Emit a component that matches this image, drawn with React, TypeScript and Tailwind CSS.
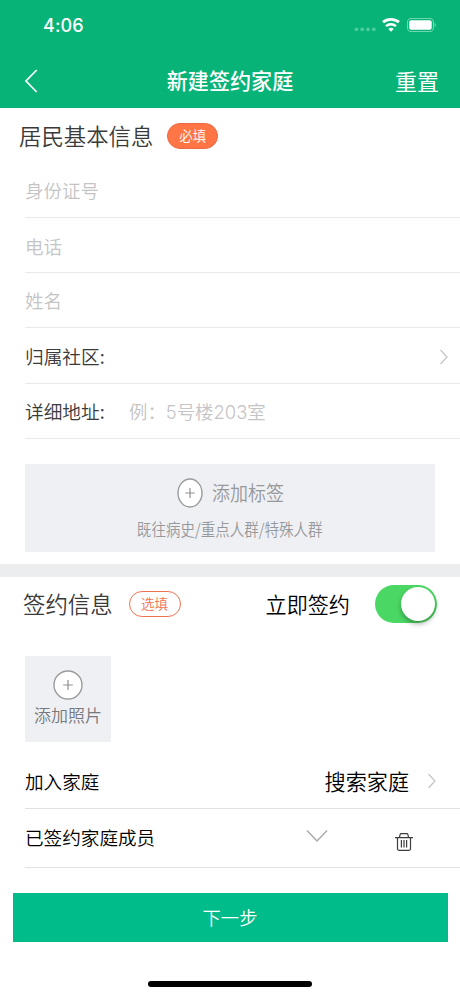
import React from "react";

const cjk = "font-['Noto_Sans_CJK_SC',sans-serif]";

function PlusCircle({ rx, className }: { rx: number; className: string }) {
  return (
    <svg viewBox="0 0 32 32" className={className} fill="none">
      <ellipse cx="16" cy="16" rx={rx} ry="14" fill="#fff" stroke="#999b9c" strokeWidth="1.4" />
      <path d="M11.2 16h9.6M16 11v10" stroke="#8f9192" strokeWidth="1.2" />
    </svg>
  );
}

function Chevron({ className }: { className: string }) {
  return (
    <svg viewBox="0 0 10 16" className={className} fill="none" stroke="#c4c4c6" strokeWidth="1.2">
      <path d="M1.5 1l6.5 7-6.5 7" />
    </svg>
  );
}

function StatusIcons() {
  return (
    <svg viewBox="0 0 90 20" className="h-5 w-[90px]" fill="none">
      <g fill="#4ccb9d">
        <rect x="4.6" y="12.8" width="3.6" height="3.2" rx="1" />
        <rect x="10.4" y="12.8" width="3.6" height="3.2" rx="1" />
        <rect x="16.2" y="12.8" width="3.6" height="3.2" rx="1" />
        <rect x="22" y="12.8" width="3.6" height="3.2" rx="1" />
      </g>
      <path d="M33 7.2a12.5 12.5 0 0 1 16 0" stroke="#fff" strokeWidth="2.8" />
      <path d="M36 11.1a7.6 7.6 0 0 1 10 0" stroke="#fff" strokeWidth="2.5" />
      <path d="M38.3 13.9a4 4 0 0 1 5.4 0L41 16.8z" fill="#fff" />
      <rect x="57.5" y="3.5" width="26" height="13" rx="3.6" stroke="#6fd6b0" strokeWidth="1.1" />
      <rect x="59.2" y="5.3" width="22.5" height="9.4" rx="2" fill="#fff" />
      <path d="M84.7 8.1c1.7.5 1.7 3.3 0 3.8z" fill="#6fd6b0" />
    </svg>
  );
}

function Field({ label, h }: { label: string; h: string }) {
  return (
    <div className={`ml-[25px] flex items-center border-b border-[#e9e9ea] text-[18.5px] font-[350] text-[#c4c4c6] ${h}`}>
      {label}
    </div>
  );
}

export default function App() {
  return (
    <div className={`flex h-[996px] w-[460px] flex-col overflow-hidden bg-white leading-none font-[350] whitespace-nowrap ${cjk}`}>
      <header className="h-[108px] shrink-0 bg-[#08b378] text-white">
        <div className="flex h-[54px] items-start justify-between pt-[15px] pr-[20px] pl-[43px]">
          <span className="pt-px font-['Inter',sans-serif] text-[18px] leading-5 font-medium tracking-[0.1px]">4:06</span>
          <StatusIcons />
        </div>
        <div className="grid h-[54px] grid-cols-[100px_1fr_100px] items-center">
          <svg viewBox="0 0 14 24" className="ml-6 h-6 w-3.5" fill="none" stroke="#fff" strokeWidth="1.7">
            <path d="M12.7 1L2 12l10.7 11" />
          </svg>
          <span className="text-center text-[21.1px] font-medium">新建签约家庭</span>
          <span className="pr-[21px] pb-[2px] text-right text-[22px] font-normal">重置</span>
        </div>
      </header>

      <section className="h-[456px] shrink-0">
        <div className="flex h-[55px] items-center pl-[19px]">
          <h2 className="pb-px text-[22.4px] font-[350] text-[#3a3a3a]">居民基本信息</h2>
          <span className="ml-[14px] flex h-[26px] w-[51px] items-center justify-center rounded-full border border-[#ec6840] bg-[#ff7545] text-[13.5px] text-white">
            必填
          </span>
        </div>
        <Field label="身份证号" h="h-[55px]" />
        <Field label="电话" h="h-[55px] pt-[2px]" />
        <Field label="姓名" h="h-[55px]" />
        <div className="ml-[25px] flex h-[56px] items-center justify-between border-b border-[#e9e9ea] pt-[2px] pr-[11px] text-[18.7px] text-[#3a3a3a]">
          <span>归属社区:</span>
          <Chevron className="h-4 w-2.5" />
        </div>
        <div className="ml-[25px] flex h-[55px] items-center border-b border-[#e9e9ea] text-[18.7px] text-[#3a3a3a]">
          <span className="w-[104px]">详细地址:</span>
          <span className="pt-px text-[18.4px] text-[#c4c4c6]">例：<span className="font-['Inter','Noto_Sans_CJK_SC',sans-serif]">5号楼203室</span></span>
        </div>
        <div className="mt-[25px] ml-[25px] flex h-[88px] w-[410px] flex-col items-center bg-[#eff0f4] text-[#97989a]">
          <div className="mt-[13px] flex h-8 items-center pl-[2px]">
            <PlusCircle rx={12} className="mr-[1px] h-8 w-8" />
            <span className="mr-[3px] inline-block w-[78px] scale-x-[0.87] pb-px text-[20.7px]">添加标签</span>
          </div>
          <span className="mt-[12px] inline-block scale-x-[0.87] text-[16.7px]">既往病史/重点人群/特殊人群</span>
        </div>
      </section>

      <div className="h-[13px] shrink-0 bg-[#ebedee]" />

      <section className="h-[291px] shrink-0">
        <div className="flex h-[54px] items-center pl-[23px]">
          <h2 className="pb-[2px] text-[22.4px] font-[350] text-[#3a3a3a]">签约信息</h2>
          <span className="ml-4 flex h-[26px] w-[52px] items-center justify-center rounded-full border-[1.5px] border-[#ef7350] text-[13.5px] text-[#f3734f]">
            选填
          </span>
          <span className="ml-[85px] pt-px text-[21.1px] text-black">立即签约</span>
          <div className="ml-[25px] flex h-[38px] w-[62px] items-center justify-end rounded-full bg-[#4bd763] pr-[2px]">
            <span className="h-[34px] w-[34px] rounded-full bg-white shadow-[0_3px_5px_rgba(0,0,0,0.3)]" />
          </div>
        </div>
        <div className="mt-[25px] ml-[25px] flex h-[86px] w-[86px] flex-col items-center bg-[#eff0f4] text-[#77797c]">
          <PlusCircle rx={14} className="mt-[13px] h-8 w-8" />
          <span className="mt-[5px] text-[17px]">添加照片</span>
        </div>
        <div className="mt-[11px] ml-[25px] flex h-[56px] items-center border-b border-[#e2e2e4] text-black">
          <span className="pt-px text-[18.6px]">加入家庭</span>
          <span className="ml-auto pt-[3px] text-[21.1px]">搜索家庭</span>
          <Chevron className="mr-[23px] ml-[18px] h-4 w-2.5" />
        </div>
        <div className="ml-[25px] flex h-[59px] items-center border-b border-[#e2e2e4] text-black">
          <span className="w-[281px] pb-[1px] text-[18.6px]">已签约家庭成员</span>
          <svg viewBox="0 0 22 14" className="mb-[4px] h-3.5 w-[22px]" fill="none" stroke="#aaa" strokeWidth="1.5">
            <path d="M1 1.5l10 10.5 10-10.5" />
          </svg>
          <svg viewBox="0 0 20 20" className="mt-2 ml-[66px] h-5 w-5" fill="none" stroke="#3c3c3c" strokeWidth="1.2">
            <path d="M1 5.6h18M5.5 5.2l.7-3q.1-.5.8-.5h6q.7 0 .8.5l.7 3M3.5 5.6v11.2q0 1.5 1.5 1.5h10q1.5 0 1.5-1.5V5.6M7.4 8v7.6M10 8v7.6M12.6 8v7.6" />
          </svg>
        </div>
      </section>

      <button className="mx-[12.5px] mt-[25px] flex h-[49px] shrink-0 items-center justify-center bg-[#00bb8a] pb-px text-[18.3px] font-[350] text-white">
        下一步
      </button>
      <div className="mt-[39px] h-[6px] w-[164px] shrink-0 self-center rounded-full bg-black" />
    </div>
  );
}
